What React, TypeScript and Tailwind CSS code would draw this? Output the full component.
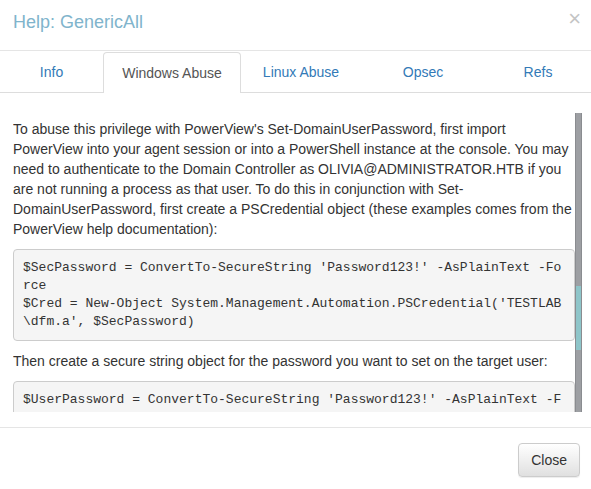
import React from 'react';

const tabs = ['Info', 'Windows Abuse', 'Linux Abuse', 'Opsec', 'Refs'];

const Pre = ({ children }: { children: React.ReactNode }) => (
  <pre className="mb-[10px] rounded-[4px] border border-[#cccccc] bg-[#f5f5f5] p-[9px] text-[13px] leading-[18px] text-[#333333] whitespace-pre-wrap break-all [font-family:'Liberation_Mono',monospace]">
    {children}
  </pre>
);

export default function App() {
  return (
    <div className="h-[489px] w-[591px] overflow-hidden bg-white text-[14px] leading-[20px] text-[#333333] [font-family:'Liberation_Sans',Arial,sans-serif]">
      {/* header */}
      <div className="flex h-[51px] justify-between border-b border-[#e5e5e5] pl-[13px] pr-[10px] pt-[9px]">
        <h4 className="text-[18px] leading-[26px] text-[#80b4cc]">Help: GenericAll</h4>
        <button className="-mt-[2px] h-[22px] text-[22px] font-normal leading-[21px] text-[#c4c4c4]">×</button>
      </div>

      {/* tabs */}
      <div className="grid grid-cols-[103px_138px_120px_124px_1fr] border-b border-[#dddddd] pt-[1px]">
        {tabs.map((t, i) =>
          i === 1 ? (
            <div
              key={t}
              className="-mb-[1px] flex h-[41px] items-center justify-center rounded-t-[4px] border border-b-0 border-[#dddddd] bg-white text-[#555555]"
            >
              {t}
            </div>
          ) : (
            <div key={t} className="flex h-[40px] items-center justify-center text-[#337ab7]">
              {t}
            </div>
          )
        )}
      </div>

      {/* body */}
      <div className="border-b border-[#e5e5e5] pb-[15px] pl-[13px] pr-[9px] pt-[20px]">
        <div className="flex h-[299px]">
          <div className="w-[562px] overflow-hidden pt-[6px]">
            <p className="mb-[10px]">
              To abuse this privilege with PowerView's Set-DomainUserPassword, first import PowerView into your agent
              session or into a PowerShell instance at the console. You may need to authenticate to the Domain
              Controller as OLIVIA@ADMINISTRATOR.HTB if you are not running a process as that user. To do this in
              conjunction with Set-DomainUserPassword, first create a PSCredential object (these examples comes from
              the PowerView help documentation):
            </p>
            <Pre>
              {"$SecPassword = ConvertTo-SecureString 'Password123!' -AsPlainText -Force\n$Cred = New-Object System.Management.Automation.PSCredential('TESTLAB\\dfm.a', $SecPassword)"}
            </Pre>
            <p className="mb-[10px]">Then create a secure string object for the password you want to set on the target user:</p>
            <Pre>{"$UserPassword = ConvertTo-SecureString 'Password123!' -AsPlainText -Force"}</Pre>
          </div>
          <div className="w-[7px] border-x border-[#8a8c90] bg-[#9d9fa3]">
            <div className="mt-[173px] h-[64px] bg-[#8ec5c9]" />
          </div>
        </div>
      </div>

      {/* footer */}
      <div className="flex justify-end pr-[11px] pt-[15px]">
        <button className="h-[34px] rounded-[4px] border border-[#cccccc] bg-gradient-to-b from-white to-[#e0e0e0] px-[12px] text-[14px] text-[#333333] shadow-[inset_0_1px_0_rgba(255,255,255,0.15),0_1px_1px_rgba(0,0,0,0.075)]">
          Close
        </button>
      </div>
    </div>
  );
}
